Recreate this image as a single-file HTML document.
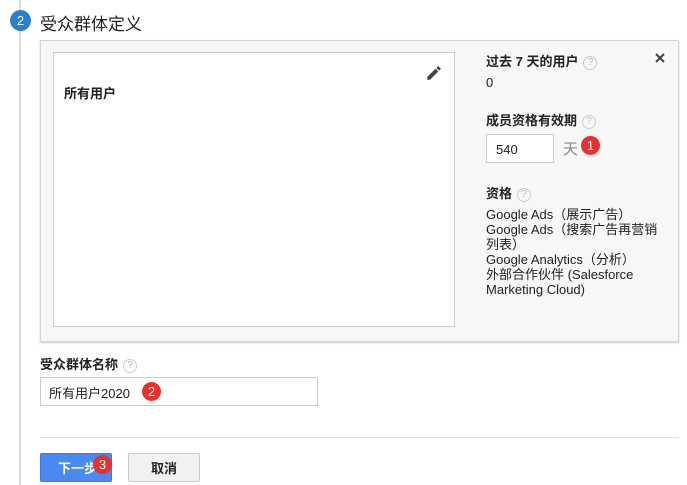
<!DOCTYPE html>
<html><head><meta charset="utf-8"><style>
*{margin:0;padding:0;box-sizing:border-box}
body{width:687px;height:485px;background:#fff;font-family:"Liberation Sans","Noto Sans CJK SC",sans-serif;color:#222;position:relative;overflow:hidden;font-size:13px}
.a{position:absolute}
.q{display:inline-block;width:14px;height:14px;border:1px solid #ccc;border-radius:50%;color:#bbb;font-size:10px;line-height:12px;text-align:center;font-weight:normal;vertical-align:1px;margin-left:5px}
.b{position:absolute;width:19px;height:19px;border-radius:50%;background:#e8302f;color:#fff;font-size:13px;line-height:19px;text-align:center}
.bold{font-weight:bold}
</style></head><body>
<div class="a" style="left:19px;top:0;width:2px;height:485px;background:#ddd"></div>
<div class="a" style="left:10px;top:10px;width:21px;height:21px;border-radius:50%;background:#2b7fd0;color:#fff;text-align:center;line-height:21px;font-size:13px">2</div>
<div class="a" style="left:40px;top:10px;font-size:17px;color:#222">受众群体定义</div>
<div class="a" style="left:40px;top:40px;width:639px;height:302px;background:#f7f7f7;border:1px solid #d4d4d4;box-shadow:0 1px 2px rgba(0,0,0,.2)"></div>
<div class="a" style="left:53px;top:52px;width:402px;height:275px;background:#fff;border:1px solid #ccc"></div>
<div class="a bold" style="left:64px;top:83px">所有用户</div>
<svg class="a" style="left:425px;top:64px" width="18" height="18" viewBox="0 0 24 24"><path fill="#444" d="M3 17.25V21h3.75L17.81 9.94l-3.75-3.75L3 17.25zM20.71 7.04a1 1 0 000-1.41l-2.34-2.34a1 1 0 00-1.41 0l-1.83 1.83 3.75 3.75 1.83-1.83z"/></svg>
<div class="a bold" style="left:486px;top:51px">过去 7 天的用户<span class="q">?</span></div>
<svg class="a" style="left:655px;top:53px" width="10" height="10" viewBox="0 0 10 10"><path d="M1 1L9 9M9 1L1 9" stroke="#444" stroke-width="2"/></svg>
<div class="a" style="left:486px;top:75px">0</div>
<div class="a bold" style="left:486px;top:110px">成员资格有效期<span class="q">?</span></div>
<div class="a" style="left:486px;top:134px;width:68px;height:29px;border:1px solid #ccc;background:#fff;padding:7px 9px">540</div>
<div class="a" style="left:563px;top:138px;font-size:15px;color:#888">天</div>
<div class="b" style="left:581px;top:136px">1</div>
<div class="a bold" style="left:486px;top:183px">资格<span class="q">?</span></div>
<div class="a" style="left:486px;top:207px;line-height:15px;width:178px">Google Ads（展示广告）<br>Google Ads（搜索广告再营销列表）<br>Google Analytics（分析）<br>外部合作伙伴 (Salesforce Marketing Cloud)</div>
<div class="a bold" style="left:40px;top:354px">受众群体名称<span class="q">?</span></div>
<div class="a" style="left:40px;top:377px;width:278px;height:29px;border:1px solid #ccc;padding:5px 8px;font-size:13px">所有用户2020</div>
<div class="b" style="left:142px;top:382px">2</div>
<div class="a" style="left:40px;top:437px;width:639px;height:1px;background:#e0e0e0"></div>
<div class="a" style="left:40px;top:453px;width:72px;height:29px;background:#4a8af0;border:1px solid #3b78e7;border-radius:2px;color:#fff;font-weight:bold;padding:4px 0 0 17px">下一步</div>
<div class="b" style="left:93px;top:455px">3</div>
<div class="a" style="left:128px;top:453px;width:72px;height:29px;background:#f1f1f1;border:1px solid #ccc;border-radius:2px;font-weight:bold;text-align:center;padding-top:4px">取消</div>
</body></html>
